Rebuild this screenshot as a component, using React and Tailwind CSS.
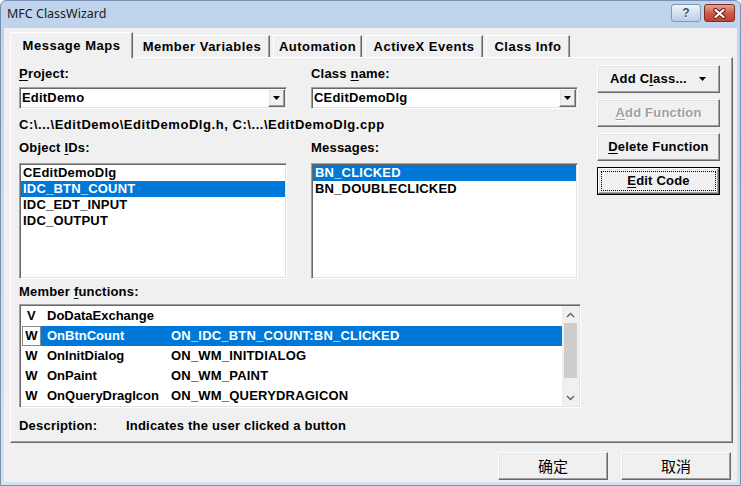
import React from "react";

const sans = "font-['Liberation_Sans',Arial,sans-serif]";
const raised =
  "bg-[#f0f0f0] border border-t-white border-l-white border-r-[#696969] border-b-[#696969] shadow-[inset_-1px_-1px_0_#a0a0a0,inset_1px_1px_0_#e3e3e3]";
const sunken =
  "bg-white border border-t-[#a0a0a0] border-l-[#a0a0a0] border-r-white border-b-white shadow-[inset_1px_1px_0_#696969,inset_-1px_-1px_0_#e3e3e3]";

function U({ children }) {
  return <span className="underline underline-offset-[2px] decoration-1">{children}</span>;
}

function DownTri() {
  return (
    <svg width="7" height="4" viewBox="0 0 7 4">
      <polygon points="0,0 7,0 3.5,4" fill="#000" />
    </svg>
  );
}

function Combo({ text }) {
  return (
    <div className={`${sunken} h-[22px] p-[1px] flex`}>
      <div className="flex-1 flex items-center pl-[1px] text-[13px] font-bold leading-[16px] tracking-[0.2px]">{text}</div>
      <div className={`${raised} w-[17px] flex items-center justify-center`}>
        <DownTri />
      </div>
    </div>
  );
}

function ListBox({ items, sel }) {
  return (
    <div className={`${sunken} h-[116px] p-[1px]`}>
      {items.map((t, i) => (
        <div
          key={t}
          className={`h-[16px] leading-[16px] pl-[2px] text-[13px] font-bold tracking-[0.2px] ${
            i === sel ? "bg-[#0078d7] text-white" : "text-black"
          }`}
        >
          {t}
        </div>
      ))}
    </div>
  );
}

const members = [
  ["V", "DoDataExchange", ""],
  ["W", "OnBtnCount", "ON_IDC_BTN_COUNT:BN_CLICKED"],
  ["W", "OnInitDialog", "ON_WM_INITDIALOG"],
  ["W", "OnPaint", "ON_WM_PAINT"],
  ["W", "OnQueryDragIcon", "ON_WM_QUERYDRAGICON"],
];

function Chevron({ up }) {
  return (
    <svg width="9" height="6" viewBox="0 0 9 6">
      <polyline
        points={up ? "1,5 4.5,1.5 8,5" : "1,1 4.5,4.5 8,1"}
        fill="none"
        stroke="#606060"
        strokeWidth="1.4"
      />
    </svg>
  );
}

export default function App() {
  return (
    <div className={`w-[741px] h-[486px] overflow-hidden ${sans} text-black`}>
      <div className="w-[741px] h-[486px] flex flex-col border border-[#7891b3] rounded-t-[6px] bg-gradient-to-b from-[#bfd3ec] via-[#cadcef] to-[#d2e2f3]">
        {/* Title bar */}
        <div className="h-[27px] flex items-start shrink-0">
          <div className="pl-[6px] pt-[4px] text-[12.5px] leading-[17px] text-[#1a1a1a] font-['Noto_Sans','Liberation_Sans',sans-serif]">
            MFC ClassWizard
          </div>
          <div className="ml-auto mr-[5px] mt-[3px] flex gap-[3px]">
            <div className="w-[30px] h-[18px] rounded-[3px] border border-[#8196b0] bg-gradient-to-b from-[#eef3fa] to-[#bccee4] flex items-center justify-center text-[12px] font-bold text-[#3a4c66] leading-none [text-shadow:0_1px_0_#ffffff]">
              ?
            </div>
            <div className="w-[31px] h-[18px] rounded-[3px] border border-[#7a2e25] bg-gradient-to-b from-[#e7a494] via-[#cf5a47] to-[#c1412f] flex items-center justify-center">
              <svg width="13" height="11" viewBox="0 0 13 11">
                <path d="M2.5 2 L10.5 9 M10.5 2 L2.5 9" stroke="#5b1c14" strokeWidth="4.2" strokeLinecap="round" />
                <path d="M2.5 2 L10.5 9 M10.5 2 L2.5 9" stroke="#ffffff" strokeWidth="2.3" strokeLinecap="round" />
              </svg>
            </div>
          </div>
        </div>

        {/* Body */}
        <div className="flex-1 mx-[3px] mb-[3px] bg-[#f0f0f0] flex flex-col pl-[6px] pt-[4px]">
          {/* Tabs */}
          <div className="h-[25px] flex items-end text-[13px] font-bold leading-[16px] tracking-[0.5px]">
            <div className="relative top-[1px] z-10 w-[123px] h-[26px] bg-[#f0f0f0] border-t border-l border-t-white border-l-white border-r border-r-[#696969] shadow-[inset_-1px_0_0_#a0a0a0] flex items-center justify-center rounded-tl-[2px]">
              Message Maps
            </div>
            <div className="ml-[2px] w-[135px] h-[22px] border-t border-t-white border-r border-r-[#696969] shadow-[inset_-1px_0_0_#a0a0a0] flex items-center justify-center">
              Member Variables
            </div>
            <div className="ml-[3px] w-[89px] h-[22px] border-t border-l border-l-white border-t-white border-r border-r-[#696969] shadow-[inset_-1px_0_0_#a0a0a0] flex items-center justify-center">
              Automation
            </div>
            <div className="ml-[3px] w-[118px] h-[22px] border-t border-l border-l-white border-t-white border-r border-r-[#696969] shadow-[inset_-1px_0_0_#a0a0a0] flex items-center justify-center">
              ActiveX Events
            </div>
            <div className="ml-[3px] w-[84px] h-[22px] border-t border-l border-l-white border-t-white border-r border-r-[#696969] shadow-[inset_-1px_0_0_#a0a0a0] flex items-center justify-center">
              Class Info
            </div>
          </div>

          {/* Panel */}
          <div className="w-[723px] h-[386px] border border-t-white border-l-white border-r-[#696969] border-b-[#696969] shadow-[inset_-1px_-1px_0_#a0a0a0] flex text-[13px] font-bold leading-[16px] tracking-[0.2px]">
            {/* Left area */}
            <div className="pl-[8px] pt-[8px] w-[570px] flex flex-col">
              <div className="grid grid-cols-[268px_267px] gap-x-[24px]">
                <div className="h-[16px]">
                  <U>P</U>roject:
                </div>
                <div className="h-[16px]">
                  Class <U>n</U>ame:
                </div>
                <div className="mt-[5px]">
                  <Combo text="EditDemo" />
                </div>
                <div className="mt-[5px]">
                  <Combo text="CEditDemoDlg" />
                </div>
              </div>
              <div className="mt-[8px] h-[16px] whitespace-nowrap tracking-[0.55px]">
                {"C:\\...\\EditDemo\\EditDemoDlg.h, C:\\...\\EditDemoDlg.cpp"}
              </div>
              <div className="mt-[7px] grid grid-cols-[268px_267px] gap-x-[24px]">
                <div className="h-[16px]">
                  Object <U>I</U>Ds:
                </div>
                <div className="h-[16px]">Messages:</div>
                <div className="mt-[7px]">
                  <ListBox items={["CEditDemoDlg", "IDC_BTN_COUNT", "IDC_EDT_INPUT", "IDC_OUTPUT"]} sel={1} />
                </div>
                <div className="mt-[7px]">
                  <ListBox items={["BN_CLICKED", "BN_DOUBLECLICKED"]} sel={0} />
                </div>
              </div>
              <div className="mt-[5px] h-[16px]">
                Member <U>f</U>unctions:
              </div>
              <div className={`${sunken} mt-[4px] w-[562px] h-[104px] p-[1px] flex`}>
                <div className="flex-1 flex flex-col">
                  {members.map(([k, n, m], i) => (
                    <div key={n} className="h-[20px] flex">
                      <div
                        className={`ml-[1px] w-[19px] h-[20px] flex items-center justify-center ${
                          i === 1 ? "border border-[#8a8a8a]" : ""
                        }`}
                      >
                        {k}
                      </div>
                      <div
                        className={`flex-1 flex items-center pl-[6px] whitespace-nowrap ${
                          i === 1 ? "bg-[#0078d7] text-white" : ""
                        }`}
                      >
                        <span className="w-[124px] shrink-0 tracking-[0px]">{n}</span>
                        <span>{m}</span>
                      </div>
                    </div>
                  ))}
                </div>
                <div className="w-[17px] bg-[#f0f0f0] flex flex-col items-center">
                  <div className="h-[17px] w-full flex items-center justify-center">
                    <Chevron up />
                  </div>
                  <div className="w-[13px] h-[55px] bg-[#cdcdcd]" />
                  <div className="mt-auto h-[17px] w-full flex items-center justify-center">
                    <Chevron />
                  </div>
                </div>
              </div>
              <div className="mt-[10px] h-[16px] flex whitespace-nowrap">
                <span className="w-[107px]">Description:</span>
                <span>Indicates the user clicked a button</span>
              </div>
            </div>

            {/* Right buttons */}
            <div className="ml-[16px] pt-[7px] w-[123px] flex flex-col gap-[6px]">
              <div className={`${raised} h-[28px] flex items-center justify-between pl-[12px] pr-[13px]`}>
                <span>
                  Add C<U>l</U>ass...
                </span>
                <DownTri />
              </div>
              <div
                className={`${raised} h-[28px] flex items-center justify-center text-[#a0a0a0] [text-shadow:1px_1px_0_#ffffff]`}
              >
                <span>
                  <U>A</U>dd Function
                </span>
              </div>
              <div className={`${raised} h-[28px] flex items-center justify-center`}>
                <span>
                  <U>D</U>elete Function
                </span>
              </div>
              <div className="h-[28px] border border-black flex">
                <div className={`${raised} flex-1 p-[2px] flex`}>
                  <div className="flex-1 border border-dotted border-black flex items-center justify-center">
                    <span>
                      <U>E</U>dit Code
                    </span>
                  </div>
                </div>
              </div>
            </div>
          </div>

          {/* Bottom buttons */}
          <div className="mt-[9px] pr-[6px] flex justify-end gap-[13px] font-['Noto_Sans_CJK_SC','Noto_Sans',sans-serif] text-[15px]">
            <div className={`${raised} w-[110px] h-[28px] flex items-center justify-center`}>确定</div>
            <div className={`${raised} w-[110px] h-[28px] flex items-center justify-center`}>取消</div>
          </div>
        </div>
      </div>
    </div>
  );
}
